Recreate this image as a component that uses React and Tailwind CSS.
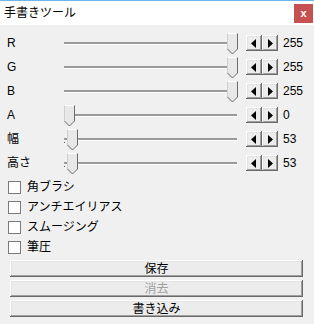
import React, { useState } from "react";

const bevel =
  "shadow-[inset_-1px_-1px_#696969,inset_1px_1px_#ffffff,inset_-2px_-2px_#a0a0a0,inset_2px_2px_#e3e3e3]";

const Thumb = () => (
  <svg width="11" height="22" viewBox="0 0 11 22" className="block">
    <path d="M0.5 21 V0.5 H10.5 V16 L5.5 21" fill="#e8e8e8" />
    <path d="M0.5 16 V0.5 H10" fill="none" stroke="#ffffff" />
    <path d="M10.5 0.5 V16 L5.5 21 L0.5 16" fill="none" stroke="#6b6b6b" />
    <path d="M0.5 0.5 V16" fill="none" stroke="#cfcfcf" />
  </svg>
);

const Spin = ({ dir }) => (
  <div className={`w-[16px] h-[16px] bg-[#ececec] flex items-center justify-center ${bevel}`}>
    <svg width="6" height="9" viewBox="0 0 6 9">
      {dir === "left" ? <path d="M5 0 V9 L0 4.5 Z" fill="#000" /> : <path d="M1 0 V9 L6 4.5 Z" fill="#000" />}
    </svg>
  </div>
);

const SliderRow = ({ label, value, pos, tick }) => (
  <div className="flex items-center h-[24px]">
    <div className="w-[57px] text-[12px] leading-none">{label}</div>
    <div className="relative w-[173px] h-[24px]">
      <div className="absolute left-0 right-0 top-[11px] h-[3px] border-t-2 border-[#9a9a9a] border-b border-b-white" />
      {tick && <div className="absolute left-0 top-[15px] w-[1px] h-[1px] bg-[#555]" />}
      <div className="absolute top-[2px]" style={{ left: pos }}>
        <Thumb />
      </div>
    </div>
    <div className="flex ml-[9px]">
      <Spin dir="left" />
      <Spin dir="right" />
    </div>
    <div className="ml-[5px] text-[12px] leading-none">{value}</div>
  </div>
);

const Check = ({ label }) => {
  const [on, setOn] = useState(false);
  return (
    <div className="flex items-center h-[20px] cursor-default" onClick={() => setOn(!on)}>
      <div className="w-[13px] h-[13px] ml-[1px] bg-white border border-[#7a7a7a] flex items-center justify-center text-[10px] leading-none">
        {on ? "✓" : ""}
      </div>
      <div className="ml-[6px] text-[12px] leading-none">{label}</div>
    </div>
  );
};

const Btn = ({ children, disabled }) => (
  <div
    className={`h-[17px] w-[293px] bg-[#ececec] flex items-center justify-center text-[12px] leading-none ${bevel} ${
      disabled ? "text-[#a0a0a0]" : "text-black"
    }`}
  >
    {children}
  </div>
);

export default function App() {
  return (
    <div
      className="w-[314px] h-[324px] bg-[#f0f0f0] text-black flex flex-col"
      style={{ fontFamily: '"Liberation Sans", "Noto Sans CJK JP", sans-serif' }}
    >
      <div className="h-[1px] bg-[#6cb6ec]" />
      <div className="h-[24px] bg-white flex items-center justify-between pl-[4px] pr-[1px]">
        <div className="text-[12px] leading-none">手書きツール</div>
        <div className="w-[19px] h-[19px] bg-[#c75050] text-white flex items-center justify-center text-[11px] font-bold leading-none">
          x
        </div>
      </div>
      <div className="flex flex-col pl-[7px] pt-[6px]">
        <SliderRow label="R" value="255" pos="163px" />
        <SliderRow label="G" value="255" pos="163px" />
        <SliderRow label="B" value="255" pos="163px" />
        <SliderRow label="A" value="0" pos="0px" />
        <SliderRow label="幅" value="53" pos="3px" tick />
        <SliderRow label="高さ" value="53" pos="3px" tick />
        <div className="flex flex-col mt-[2px]">
          <Check label="角ブラシ" />
          <Check label="アンチエイリアス" />
          <Check label="スムージング" />
          <Check label="筆圧" />
        </div>
        <div className="flex flex-col gap-[3px] mt-[3px] ml-[3px]">
          <Btn>保存</Btn>
          <Btn disabled>消去</Btn>
          <Btn>書き込み</Btn>
        </div>
      </div>
    </div>
  );
}
